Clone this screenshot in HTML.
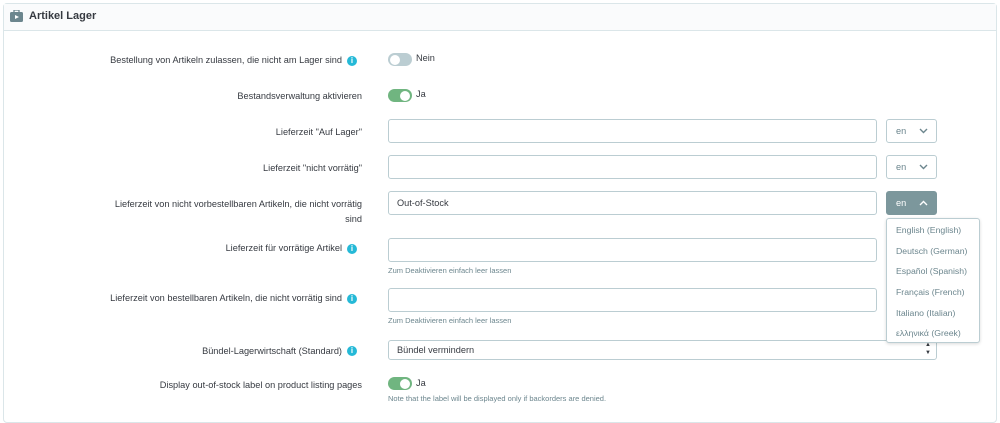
<html><head><style>
body{margin:0;width:1000px;height:417px;background:#fff;font-family:"Liberation Sans",sans-serif;color:#363a41;overflow:hidden;position:relative}
.a{position:absolute}
.card{left:3px;top:3px;width:994px;height:420px;border:1px solid #dbe6e9;border-radius:4px;box-sizing:border-box}
.hd{left:4px;top:4px;width:992px;height:26px;background:#fafbfc;border-bottom:1px solid #dbe6e9}
.lbl{right:638px;font-size:9.2px;text-align:right;line-height:14px}
.lbl.i{right:658px}
.info{width:10px;height:10px;border-radius:50%;background:#25b9d7;color:#fff;font-size:8px;font-weight:bold;text-align:center;line-height:10px;left:347px}
.in{left:388px;width:489px;height:24px;border:1px solid #bbcdd2;border-radius:3px;box-sizing:border-box;font-size:9.2px;line-height:22px;padding-left:8px}
.lang{left:886px;width:51px;height:24px;border:1px solid #bbcdd2;border-radius:3px;box-sizing:border-box;font-size:9.2px;line-height:22px;padding-left:9px;color:#6c868e}
.lang svg{position:absolute;left:32px;top:8px}
.tg{width:24px;height:13px;border-radius:7px;left:388px}
.tg::after{content:"";position:absolute;top:1.5px;width:10px;height:10px;border-radius:50%;background:#fff}
.on{background:#70b580}.on::after{right:2px}
.off{background:#bbcdd2}.off::after{left:2px}
.tt{left:416px;font-size:9.2px}
.help{left:388px;font-size:7.5px;color:#6c868e}
.dd{left:886px;top:218px;width:94px;height:125px;border:1px solid #bbcdd2;border-radius:3px;box-sizing:border-box;background:#fff;box-shadow:0 1px 3px rgba(0,0,0,.15)}
.dd div{position:absolute;left:9px;font-size:8.7px;color:#6c868e}
</style></head><body>
<div class="a card"></div><div class="a hd"></div>
<svg class="a" style="left:10px;top:10px" width="13" height="12"><rect x="0" y="2" width="13" height="10" rx="1.5" fill="#6c868e"/><rect x="4" y="0" width="5" height="3" fill="none" stroke="#6c868e" stroke-width="1.3"/><path d="M5 5l4 2-4 2z" fill="#fff"/></svg>
<div class="a" style="left:29px;top:10px;font-size:11px;font-weight:bold;color:#363a41">Artikel Lager</div>

<div class="a lbl i" style="top:53px">Bestellung von Artikeln zulassen, die nicht am Lager sind</div><div class="a info" style="top:56px">i</div>
<div class="a tg off" style="top:53px"></div><div class="a tt" style="top:53px">Nein</div>

<div class="a lbl" style="top:89px">Bestandsverwaltung aktivieren</div>
<div class="a tg on" style="top:89px"></div><div class="a tt" style="top:89px">Ja</div>

<div class="a lbl" style="top:125px">Lieferzeit "Auf Lager"</div>
<div class="a in" style="top:119px"></div><div class="a lang" style="top:119px">en<svg width="9" height="6"><path d="M1 1l3.5 3.5L8 1" fill="none" stroke="#6c868e" stroke-width="1.4"/></svg></div>

<div class="a lbl" style="top:161px">Lieferzeit "nicht vorrätig"</div>
<div class="a in" style="top:155px"></div><div class="a lang" style="top:155px">en<svg width="9" height="6"><path d="M1 1l3.5 3.5L8 1" fill="none" stroke="#6c868e" stroke-width="1.4"/></svg></div>

<div class="a lbl" style="top:197px;width:258px;line-height:15px">Lieferzeit von nicht vorbestellbaren Artikeln, die nicht vorrätig sind</div>
<div class="a in" style="top:191px">Out-of-Stock</div><div class="a lang" style="top:191px;background:#7c979c;border-color:#7c979c;color:#fff">en<svg width="9" height="6"><path d="M1 5l3.5-3.5L8 5" fill="none" stroke="#fff" stroke-width="1.4"/></svg></div>

<div class="a lbl i" style="top:241px">Lieferzeit für vorrätige Artikel</div><div class="a info" style="top:244px">i</div>
<div class="a in" style="top:238px"></div><div class="a help" style="top:266px">Zum Deaktivieren einfach leer lassen</div>

<div class="a lbl i" style="top:291px">Lieferzeit von bestellbaren Artikeln, die nicht vorrätig sind</div><div class="a info" style="top:294px">i</div>
<div class="a in" style="top:288px"></div><div class="a help" style="top:316px">Zum Deaktivieren einfach leer lassen</div>

<div class="a lbl i" style="top:344px">Bündel-Lagerwirtschaft (Standard)</div><div class="a info" style="top:346px">i</div>
<div class="a in" style="top:340px;width:549px;height:20px;line-height:18px">Bündel vermindern<span style="position:absolute;right:5px;top:0;font-size:6px;line-height:8px">&#9650;<br>&#9660;</span></div>

<div class="a lbl" style="top:378px">Display out-of-stock label on product listing pages</div>
<div class="a tg on" style="top:377px"></div><div class="a tt" style="top:378px">Ja</div>
<div class="a help" style="top:394px">Note that the label will be displayed only if backorders are denied.</div>

<div class="a dd">
<div style="top:6px">English (English)</div>
<div style="top:27px">Deutsch (German)</div>
<div style="top:47px">Español (Spanish)</div>
<div style="top:68px">Français (French)</div>
<div style="top:89px">Italiano (Italian)</div>
<div style="top:109px">ελληνικά (Greek)</div>
</div>
</body></html>
